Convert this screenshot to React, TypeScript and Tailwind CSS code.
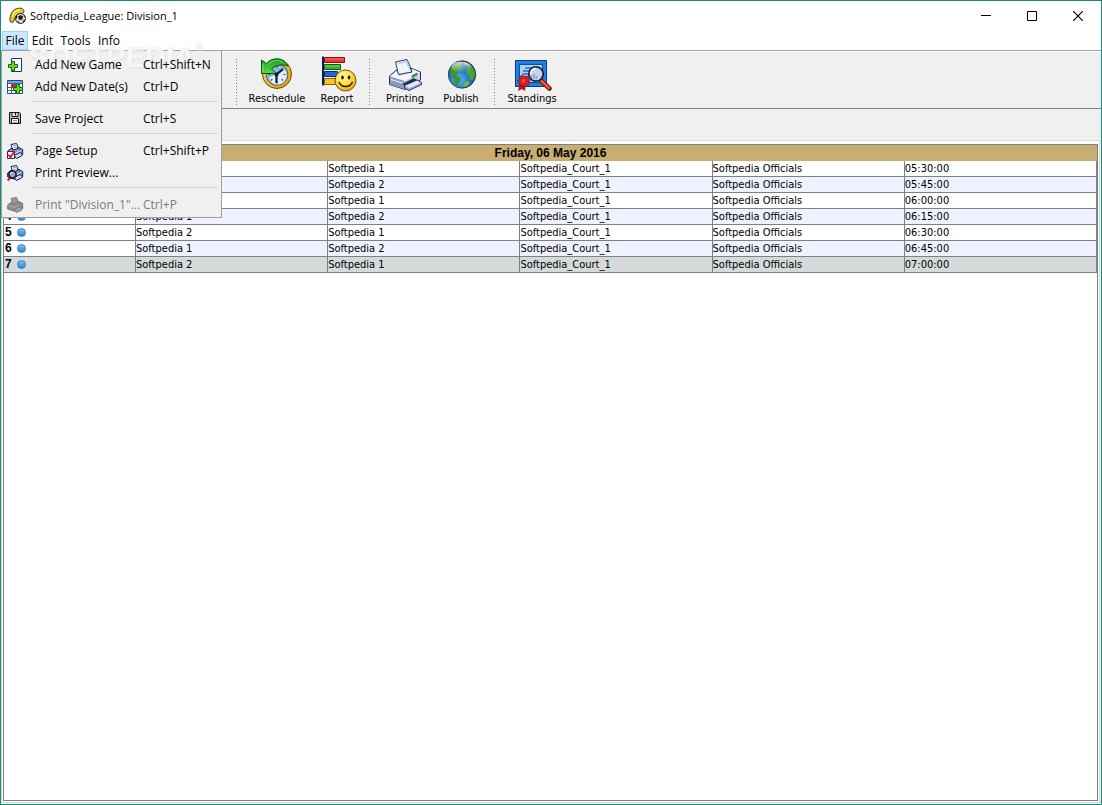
import React from "react";

const UI = "font-['Open_Sans','Noto_Sans',sans-serif]";
const TAHOMA = "font-['DejaVu_Sans_Condensed','DejaVu_Sans',sans-serif]";

function AppLogo() {
  return (
    <svg width="18" height="18" viewBox="0 0 18 18" aria-hidden="true">
      <path d="M1 14.500C.3 8 3.500 2 9.500 1.200c4-.4 5.500 1.300 5.500 3.800l-3 2c-3 0-5 1-6 4l-2 4.500z" fill="#e3c92a" stroke="#4a4210" />
      <path d="M3.500 9.500C4.500 5.500 7.500 3 11 3" fill="none" stroke="#fff17a" strokeWidth="1.500" />
      <circle cx="11.500" cy="11.500" r="5" fill="#dcdcd8" stroke="#222" />
      <path d="M9.200 9.500l2.300-1.500 2.500 1.500-.8 3.200h-3.200zM6.500 9.500l1.500-1.500.5 2-1.300 2zM15 7.500l1.500 2.500-1.700-.5zM8 14l2 .5.500 1.700zM14 13.500l2.300-.5-2 2.700z" fill="#151515" />
    </svg>
  );
}

function GreenPlus({ x, y }: { x: number; y: number }) {
  return (
    <path
      transform={`translate(${x} ${y})`}
      d="M3.500.5h3v3h3v3h-3v3h-3v-3h-3v-3h3z"
      fill="#6fd21f"
      stroke="#17660f"
    />
  );
}

function AddGameIcon() {
  return (
    <svg width="16" height="16" viewBox="0 0 16 16" aria-hidden="true">
      <path d="M4.500 1.500h10v13h-10z" fill="#f4f9ff" stroke="#123a86" />
      <path d="M5.500 2.500h8v3h-8z" fill="#fff" />
      <GreenPlus x={1} y={4} />
    </svg>
  );
}

function AddDateIcon() {
  return (
    <svg width="16" height="16" viewBox="0 0 16 16" aria-hidden="true">
      <path d="M.5 1.500h15v13H.5z" fill="#fff" stroke="#1c4c90" />
      <path d="M1 2h14v2H1z" fill="#74a5dc" />
      <path d="M1 4.500h14M1 8.500h14M1 11.500h14M4.500 4v10M8.500 4v10M12.500 4v10" stroke="#3468ac" />
      <path d="M4 5h4v4H4z" fill="#e32212" />
      <GreenPlus x={6} y={5} />
    </svg>
  );
}

function SaveIcon() {
  return (
    <svg width="16" height="16" viewBox="0 0 16 16" aria-hidden="true">
      <path d="M2.500 1.500h10l1 1v10h-11z" fill="#bdbdbd" stroke="#111" />
      <path d="M5 1.500h6v4H5z" fill="#fff" stroke="#111" />
      <path d="M8.500 2v2.500" stroke="#111" strokeWidth="1.300" />
      <path d="M4.500 7.500h7v5h-7z" fill="#fff" stroke="#111" />
      <path d="M6 9.500h4M6 11.500h4" stroke="#777" strokeWidth=".8" />
    </svg>
  );
}

function SmallPrinter({ gray = false }: { gray?: boolean }) {
  const line = gray ? "#747474" : "#141b48";
  return (
    <g>
      <path d="M4 1.500L9.500.5l2 5-5.500 2z" fill={gray ? "#a5a5a5" : "#fff"} stroke={line} />
      <path d="M6 3l3-.7M6.700 4.700l3-.8" stroke={gray ? "#888" : "#5f7bc0"} strokeWidth=".8" />
      <path d="M.7 8l4-3 1 2 5.500-1.500-.5-1.500 5 2.500v5L9 14.500.7 12z" fill={gray ? "#8d8d8d" : "#8f9bcb"} stroke={line} />
      <path d="M1.500 8.500l7 2 6-3.500" fill="none" stroke={gray ? "#aaa" : "#f4f6ff"} />
      <path d="M7 12.500l6-3 2.500 1.500-1 2-5 2.500z" fill={gray ? "#a0a0a0" : "#ccd4f0"} stroke={line} />
      <path d="M12 7.500l2-1" stroke={gray ? "#777" : "#28a03c"} strokeWidth="1.300" />
    </g>
  );
}

function PageSetupIcon() {
  return (
    <svg width="18" height="16" viewBox="0 0 18 16" aria-hidden="true">
      <SmallPrinter />
      <path d="M.5 8.500h7v7h-7z" fill="#fff" stroke="#21306c" />
      <path d="M1.500 11.500l2 3 4-6.500" fill="none" stroke="#e31414" strokeWidth="1.800" />
    </svg>
  );
}

function PrintPreviewIcon() {
  return (
    <svg width="18" height="16" viewBox="0 0 18 16" aria-hidden="true">
      <SmallPrinter />
      <path d="M.7 15.500l3-3" stroke="#c02818" strokeWidth="2" />
      <circle cx="5.500" cy="9.500" r="3.600" fill="#98a4d4" stroke="#14182c" strokeWidth="1.600" />
      <path d="M3.500 9a2 2 0 0 1 2-1.800" fill="none" stroke="#fff" />
    </svg>
  );
}

function PrintDisabledIcon() {
  return (
    <svg width="18" height="16" viewBox="0 0 18 16" aria-hidden="true">
      <SmallPrinter gray />
    </svg>
  );
}

function RescheduleIcon() {
  return (
    <svg width="40" height="36" viewBox="0 0 40 36" aria-hidden="true">
      <defs>
        <linearGradient id="gold" x1="0" y1="0" x2="1" y2="1">
          <stop offset="0" stopColor="#ffe45a" />
          <stop offset="1" stopColor="#e09408" />
        </linearGradient>
        <linearGradient id="leaf" x1="0" y1="0" x2="0" y2="1">
          <stop offset="0" stopColor="#169b22" />
          <stop offset="1" stopColor="#57dc3d" />
        </linearGradient>
      </defs>
      <circle cx="20" cy="18" r="14.500" fill="url(#gold)" stroke="#6b4a08" />
      <circle cx="20" cy="18.500" r="10.800" fill="#8fb4e0" stroke="#5b5c50" />
      <path d="M12 22a9 9 0 0 0 15 4 9.500 9.500 0 0 0 1-12z" fill="#e2effd" />
      <path d="M20 9.500v2M28.500 18.500h-2M20 27.500v-2M11.500 18.500h2M26 12.500l-1.300 1.300M26 24.500l-1.300-1.300M14 24.500l1.300-1.300" stroke="#2d3f68" strokeWidth="1.200" />
      <path d="M19.500 27V18.500l6-5" fill="none" stroke="#111a2c" strokeWidth="2.200" />
      <circle cx="19.500" cy="18.500" r="2" fill="#111a2c" />
      <path d="M4.500 4v13.500h15l-5-4.500c4-4 11-5 16.500-3C28 2 16 0 9.500 7.500z" fill="url(#leaf)" stroke="#0c5413" />
      <path d="M6 8v8M10 9.500c5-6 12-6 16-3" fill="none" stroke="#8fe97e" strokeWidth=".8" />
    </svg>
  );
}

function ReportIcon() {
  return (
    <svg width="40" height="36" viewBox="0 0 40 36" aria-hidden="true">
      <defs>
        <radialGradient id="smile" cx=".38" cy=".3" r=".75">
          <stop offset="0" stopColor="#fff7a0" />
          <stop offset=".55" stopColor="#ffdb3c" />
          <stop offset="1" stopColor="#eca410" />
        </radialGradient>
      </defs>
      <path d="M6 .5v29" stroke="#101c58" strokeWidth="2" />
      <path d="M7.500 1.500h20v5h-20z" fill="#f3322b" stroke="#8b1010" />
      <path d="M7.500 8.500h16v5h-16z" fill="#32b62c" stroke="#0e5c12" />
      <path d="M7.500 15.500h13v5h-13z" fill="#2565d6" stroke="#102b78" />
      <path d="M7.500 22.500h11v6h-11z" fill="#ffc31f" stroke="#8b6000" />
      <path d="M8 3h19M8 10h15" stroke="#fff" strokeOpacity=".35" />
      <circle cx="28.500" cy="24.500" r="10.500" fill="url(#smile)" stroke="#72500c" />
      <ellipse cx="25.500" cy="21.500" rx="1.300" ry="2" fill="#201a0a" />
      <ellipse cx="32" cy="21.500" rx="1.300" ry="2" fill="#201a0a" />
      <path d="M22 26c2 6 11 6 13.500 0" fill="none" stroke="#201a0a" strokeWidth="1.400" />
    </svg>
  );
}

function PrintingIcon() {
  return (
    <svg width="40" height="36" viewBox="0 0 40 36" aria-hidden="true">
      <path d="M10.500 6L22 3.500l5.500 12.500-13.500 5z" fill="#edf5ff" stroke="#303b66" />
      <path d="M12.500 7.500l9-1.800 4 9.300" fill="none" stroke="#b8d2f3" strokeWidth="1.500" />
      <path d="M4.500 20l7-6 2 4.500L27 16l-1.500-4 10 4v8L20 33.500 4.500 28.500z" fill="#cbd2ea" stroke="#2d3457" />
      <path d="M5 20.500l14.500 4.500L35 16.500l-8-3.500 1 3.500-14 3.500-2.500-5z" fill="#f7f8ff" />
      <path d="M19.500 25v8L5 28.500v-8z" fill="#8d9ac6" />
      <path d="M6 23.500l13 4" stroke="#edf0fc" />
      <path d="M27 19.500l5-2.500v2L27 21.500z" fill="#38b54a" stroke="#167322" strokeWidth=".7" />
      <path d="M17 28l12-6 4 2.500-12 6z" fill="#242d53" />
      <path d="M19.500 29.500L32 24l4.500 2.500v2L24 34.500l-4.500-2.500z" fill="#9fb2dd" stroke="#2d3457" />
      <path d="M20.500 29.800l11.500-5 3.500 2-11.500 5.200z" fill="#e5edff" />
    </svg>
  );
}

function GlobeIcon() {
  return (
    <svg width="40" height="36" viewBox="0 0 40 36" aria-hidden="true">
      <defs>
        <radialGradient id="sea" cx=".4" cy=".7" r=".8">
          <stop offset="0" stopColor="#5eb9f7" />
          <stop offset=".55" stopColor="#1766bd" />
          <stop offset="1" stopColor="#0a2568" />
        </radialGradient>
        <linearGradient id="shine" x1="0" y1="0" x2="0" y2="1">
          <stop offset="0" stopColor="#fff" stopOpacity=".75" />
          <stop offset="1" stopColor="#fff" stopOpacity=".03" />
        </linearGradient>
      </defs>
      <circle cx="21" cy="18.500" r="13.700" fill="url(#sea)" stroke="#122a58" strokeWidth=".8" />
      <path d="M8.500 14c1.500-4 5-7 10-8l3 2-1.500 3 2 2-4 3-3 1 1 3 4 2-1 4-3 4-2-1-1-6-3-3z" fill="#3f9430" />
      <path d="M23 6l5 1.500c4 3 6 7 6 11l-2 6-3-1-1-4-3-2 1-4 3-1-2-3-4-1z" fill="#4aa22f" />
      <path d="M23 27l4-2 2 2-3 3-4 1z" fill="#71bd37" />
      <ellipse cx="20" cy="11" rx="9.500" ry="5.500" fill="url(#shine)" />
    </svg>
  );
}

function StandingsIcon() {
  return (
    <svg width="40" height="36" viewBox="0 0 40 36" aria-hidden="true">
      <path d="M3.500 4.500h31v26h-31z" fill="#1b78dc" stroke="#0c397e" />
      <path d="M5 6h28v23H5z" fill="none" stroke="#3f98ee" strokeDasharray="1 1" />
      <path d="M7.500 8.500h23v18h-23z" fill="#a9d3fb" stroke="#0f4da4" />
      <path d="M13 12h11M11 15h10M10 18h7M10 21h7" stroke="#2a70c4" strokeWidth="1.300" />
      <path d="M8 26l-2 9 4-2 3 2 1-8z" fill="#b6121a" />
      <path d="M10.500 19.500l2 1 2.500-.5 1 2.200 2 1.300-.8 2.500-.2 2.500-2.500.8-2 1.700-2.300-1.300-2.500-.4-.4-2.500-1.500-2 1.700-1.900.5-2.600z" fill="#e22027" stroke="#860c14" strokeWidth=".8" />
      <circle cx="11.500" cy="25" r="2.800" fill="#f0443e" stroke="#b4161d" />
      <path d="M29.500 25l8 7.500" stroke="#781207" strokeWidth="4.500" strokeLinecap="round" />
      <path d="M29.500 25l7.500 7" stroke="#f55430" strokeWidth="2.500" strokeLinecap="round" />
      <circle cx="24" cy="18" r="7.200" fill="#c3d3ea" fillOpacity=".94" stroke="#1b2440" strokeWidth="1.800" />
      <path d="M19 17.500c0-3 2-5 5-5" fill="none" stroke="#fff" strokeWidth="1.500" />
      <path d="M19.500 22v-3M22 23v-5M24.500 23v-3" stroke="#8da0bf" strokeWidth="1.500" />
    </svg>
  );
}

type Item = { label: string; keys?: string; icon: React.ReactNode; disabled?: boolean };

const fileMenu: Item[][] = [
  [
    { label: "Add New Game", keys: "Ctrl+Shift+N", icon: <AddGameIcon /> },
    { label: "Add New Date(s)", keys: "Ctrl+D", icon: <AddDateIcon /> },
  ],
  [{ label: "Save Project", keys: "Ctrl+S", icon: <SaveIcon /> }],
  [
    { label: "Page Setup", keys: "Ctrl+Shift+P", icon: <PageSetupIcon /> },
    { label: "Print Preview...", icon: <PrintPreviewIcon /> },
  ],
  [{ label: 'Print "Division_1"...', keys: "Ctrl+P", icon: <PrintDisabledIcon />, disabled: true }],
];

function FileMenu() {
  return (
    <div role="menu" className="absolute left-0 top-[19px] w-[221px] border border-[#a0a0a0] bg-[#f0f0f0] pt-[3px] pb-px">
      {fileMenu.map((group, g) => (
        <div key={g} role="group">
          {g > 0 && (
            <div role="separator" className="flex h-2.5 items-start pt-[3px] pl-[30px] pr-[3px]">
              <div className="h-px w-full bg-[#d4d4d4]" />
            </div>
          )}
          {group.map((it) => (
            <button
              key={it.label}
              role="menuitem"
              disabled={it.disabled}
              className={`relative z-20 flex h-[22px] w-full items-center text-left ${it.disabled ? "text-[#7b7b7b]" : "text-black"}`}
            >
              <span className="flex w-[33px] shrink-0 pl-[5px]">{it.icon}</span>
              <span className="w-[108px] shrink-0 whitespace-nowrap">{it.label}</span>
              <span className="whitespace-nowrap">{it.keys}</span>
            </button>
          ))}
        </div>
      ))}
    </div>
  );
}

function Watermark() {
  return (
    <div
      aria-hidden="true"
      className="pointer-events-none absolute left-7 top-3 z-10 flex items-start font-['Liberation_Sans',sans-serif] text-[29px] leading-[28px] font-bold text-[#f6f6f6] [text-shadow:1px_1px_2px_#e2e2e2]"
    >
      SOFTPEDIA<span className="text-[10px] leading-[8px]">®</span>
    </div>
  );
}

function ToolSeparator() {
  return (
    <div className="ml-[5px] mr-[7px] mt-2 h-[46px] w-px bg-[repeating-linear-gradient(to_bottom,#808080_0_1px,transparent_1px_3px)]" />
  );
}

function ToolButton({ label, width, children }: { label: string; width: string; children: React.ReactNode }) {
  return (
    <button className={`flex flex-col items-center pt-[5px] text-[11px] leading-[14px] ${width}`}>
      {children}
      <span>{label}</span>
    </button>
  );
}

const games = [
  ["Softpedia 2", "Softpedia 1", "05:30:00"],
  ["Softpedia 1", "Softpedia 2", "05:45:00"],
  ["Softpedia 2", "Softpedia 1", "06:00:00"],
  ["Softpedia 1", "Softpedia 2", "06:15:00"],
  ["Softpedia 2", "Softpedia 1", "06:30:00"],
  ["Softpedia 1", "Softpedia 2", "06:45:00"],
  ["Softpedia 2", "Softpedia 1", "07:00:00"],
];

function Schedule() {
  const cell = "h-4 overflow-hidden whitespace-nowrap border-b border-r border-[#808080] p-0";
  return (
    <table className="w-full table-fixed border-separate border-spacing-0 text-[11px] leading-[15px]">
      <colgroup>
        <col className="w-[132px]" />
        <col />
        <col />
        <col />
        <col />
        <col />
      </colgroup>
      <thead>
        <tr>
          <th colSpan={6} className="h-4 bg-[#c8ae71] p-0 pt-px text-center font-['Liberation_Sans',sans-serif] text-[12px] leading-[15px] font-bold">
            Friday, 06 May 2016
          </th>
        </tr>
      </thead>
      <tbody>
        {games.map(([home, away, time], i) => {
          const last = i === games.length - 1;
          const bg = last ? "bg-[#d4dad9]" : i % 2 ? "bg-[#eef2ff]" : "bg-white";
          return (
            <tr key={time} className={bg}>
              <td className={`${cell} ${last ? "bg-[#d4dad9]" : "bg-white"}`}>
                <div className="flex items-center gap-[5px] pl-px font-['Liberation_Sans',sans-serif] text-[12px] font-bold">
                  {i + 1}
                  <span className="size-[9px] rounded-full border border-[#2f7fc0] bg-linear-to-b from-[#7fc0f0] to-[#1c86dc]" />
                </div>
              </td>
              <td className={cell}>{home}</td>
              <td className={cell}>{away}</td>
              <td className={cell}>Softpedia_Court_1</td>
              <td className={cell}>Softpedia Officials</td>
              <td className={cell}>{time}</td>
            </tr>
          );
        })}
      </tbody>
    </table>
  );
}

export default function App() {
  return (
    <div className={`flex min-h-screen flex-col border border-[#1a8c7c] bg-white text-black ${TAHOMA}`}>
      <header className={`flex h-[30px] items-center pl-2 text-[11px] ${UI}`}>
        <AppLogo />
        <h1 className="ml-[3px] flex-1">Softpedia_League: Division_1</h1>
        <button aria-label="Minimize" className="flex h-7 w-[46px] items-center justify-center">
          <svg width="10" height="10" viewBox="0 0 10 10"><path d="M0 4.500h10" stroke="#000" /></svg>
        </button>
        <button aria-label="Maximize" className="flex h-7 w-[46px] items-center justify-center">
          <svg width="10" height="10" viewBox="0 0 10 10"><path d="M.5.5h9v9h-9z" fill="none" stroke="#000" /></svg>
        </button>
        <button aria-label="Close" className="flex h-7 w-[46px] items-center justify-center">
          <svg width="10" height="10" viewBox="0 0 10 10"><path d="M0 0l10 10M10 0L0 10" stroke="#000" strokeWidth="1.200" /></svg>
        </button>
      </header>

      <nav className={`relative flex h-[19px] text-[12px] leading-[18px] ${UI}`}>
        <button className="relative z-20 ml-px w-[26px] border border-[#99d1ff] bg-[#cce8ff] leading-[17px]">File</button>
        <button className="relative z-20 w-[29px]">Edit</button>
        <button className="relative z-20 w-[37px]">Tools</button>
        <button className="relative z-20 w-[30px]">Info</button>
        <FileMenu />
        <Watermark />
      </nav>

      <div
        role="toolbar"
        className="flex h-[59px] border-y border-t-[#a0a0a0] border-b-[#808080] bg-[#f0f0f0] pl-[230px] shadow-[inset_0_1px_#fff]"
      >
        <ToolSeparator />
        <ToolButton label="Reschedule" width="w-[66px]"><RescheduleIcon /></ToolButton>
        <ToolButton label="Report" width="w-[54px]"><ReportIcon /></ToolButton>
        <ToolSeparator />
        <ToolButton label="Printing" width="w-[56px]"><PrintingIcon /></ToolButton>
        <ToolButton label="Publish" width="w-[56px]"><GlobeIcon /></ToolButton>
        <ToolSeparator />
        <ToolButton label="Standings" width="w-[60px]"><StandingsIcon /></ToolButton>
      </div>

      <main className="flex flex-1 flex-col bg-[#f0f0f0] pt-[31px] pb-px pr-px">
        <div className="flex flex-1 flex-col border border-[#d9d9d9] bg-white pt-[3px] pl-px pr-px pb-px">
          <div className="flex-1 border border-[#808080]">
            <Schedule />
          </div>
        </div>
      </main>
    </div>
  );
}
